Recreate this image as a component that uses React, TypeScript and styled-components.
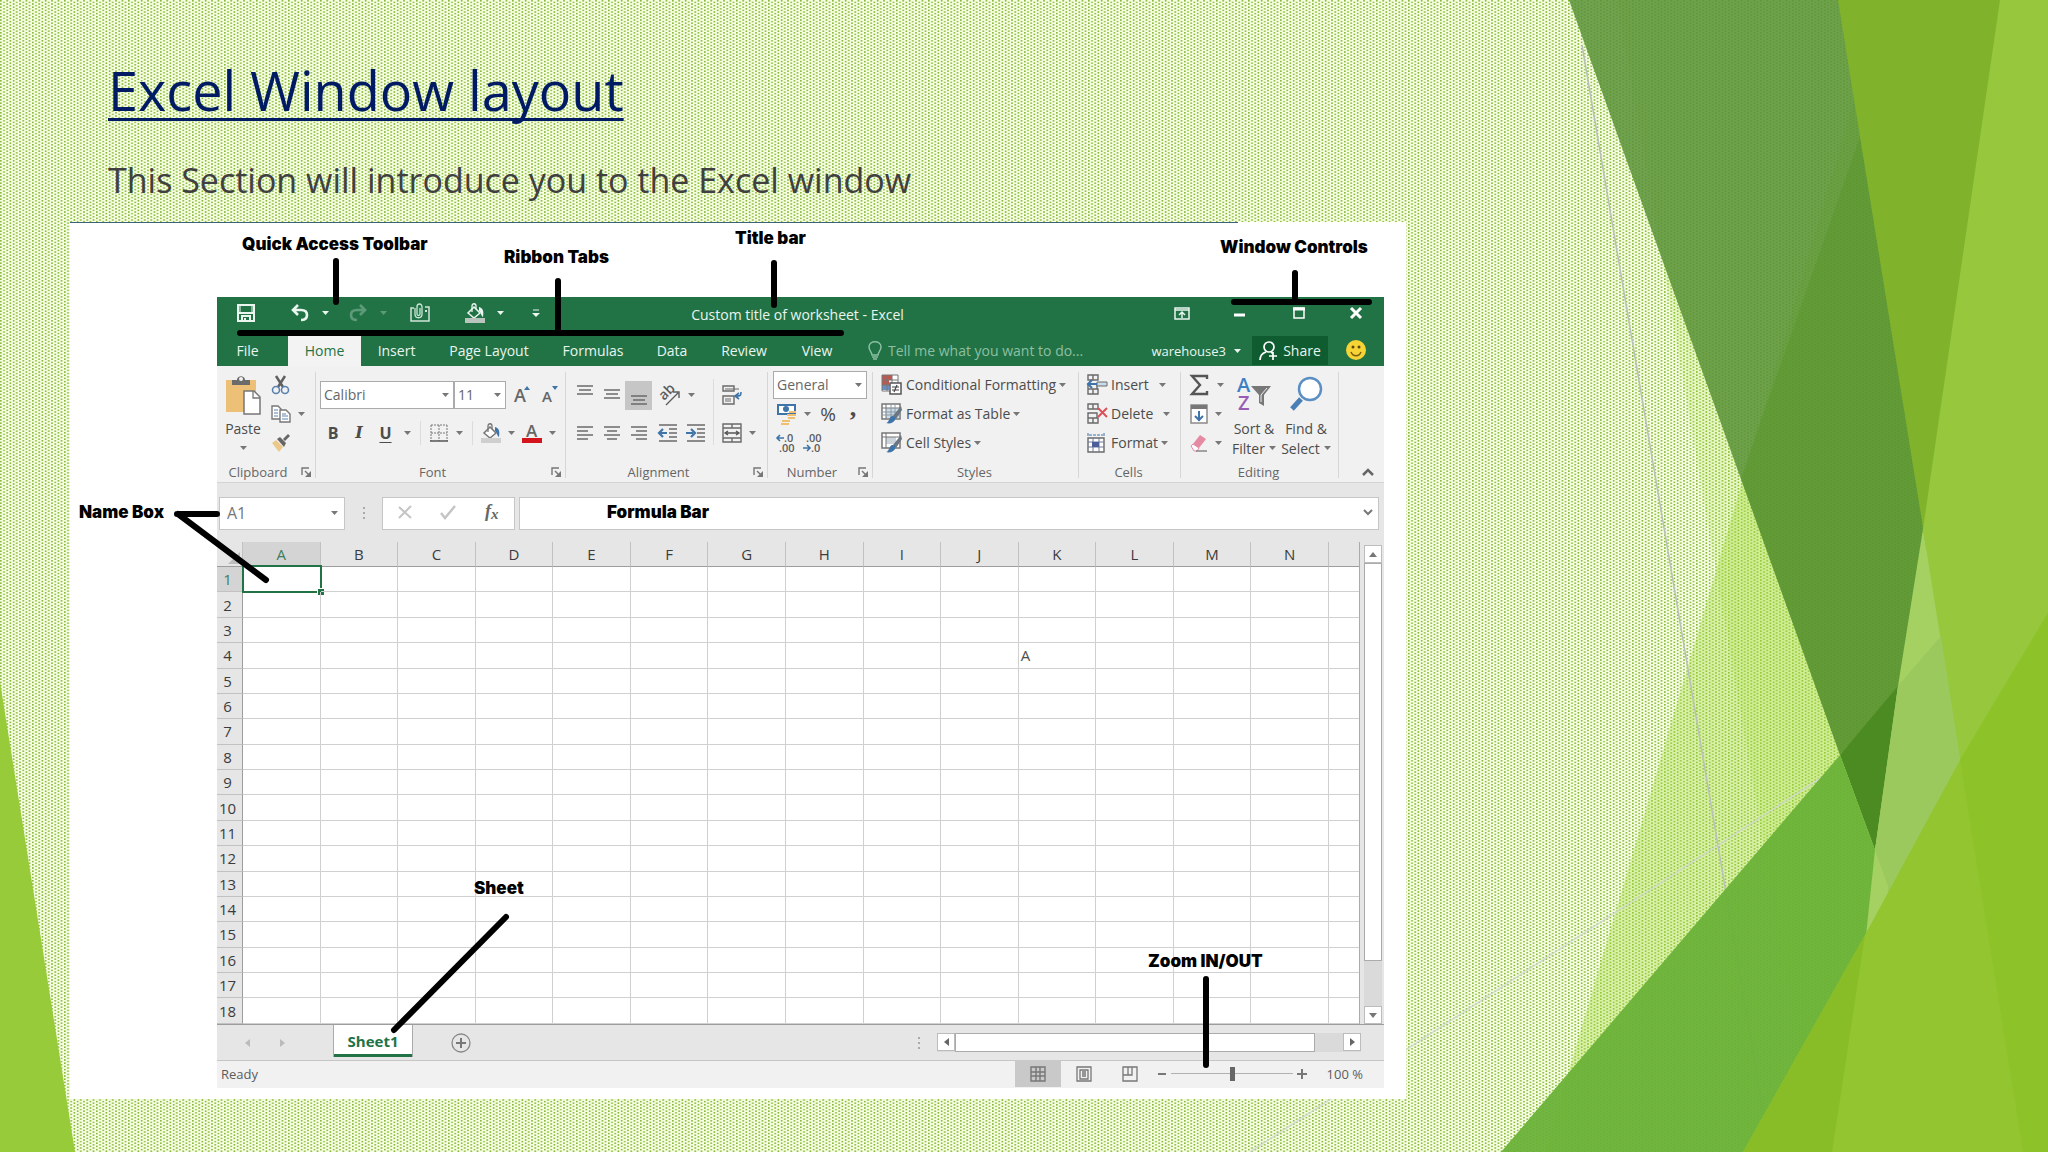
import React from "react";
import styled, { createGlobalStyle, css } from "styled-components";

const GlobalStyle = createGlobalStyle`
  *, *::before, *::after { box-sizing: border-box; }
  body { margin: 0; background: #f0fbd8; font-family: "Open Sans", "Noto Sans", sans-serif; }
  button, input, select { font: inherit; color: inherit; }
`;

const INK = "#5c5c5c";
const BLUE = "#3f74a8";

/* ---------- slide ---------- */

const Slide = styled.main`
  position: relative;
  min-height: 100vh;
  overflow: hidden;
  display: grid;
  grid-template-columns: minmax(0, 11fr) minmax(0, 5fr);
`;

const Backdrop = styled.svg`
  position: absolute;
  inset: 0;
  width: 100%;
  height: 100%;
`;

const Content = styled.div`
  position: relative;
  padding: 54px 2px 53px 70px;
`;

const Heading = styled.h1`
  margin: 0 0 30px;
  padding-left: 38px;
  font-size: 54px;
  line-height: 72px;
  font-weight: 400;
  color: #001b64;
  text-decoration: underline;
  text-decoration-thickness: 3px;
  text-underline-offset: 7px;
  text-decoration-skip-ink: none;
`;

const Intro = styled.p`
  margin: 0 0 18px;
  padding-left: 38px;
  font-size: 34px;
  line-height: 48px;
  color: #404040;
`;

const Figure = styled.figure`
  position: relative;
  margin: 0;
  padding: 75px 22px 11px 147px;
  background: #fff;
`;

const TopRule = styled.div`
  position: absolute;
  top: 0;
  left: 0;
  width: 1168px;
  height: 1px;
  background: #3c6478;
`;

const Note = styled.figcaption<{ $x: number; $y: number }>`
  position: absolute;
  left: ${(p) => p.$x}px;
  top: ${(p) => p.$y}px;
  font-family: Inter, "Liberation Sans", sans-serif;
  font-size: 17px;
  line-height: 20px;
  font-weight: 900;
  color: #000;
  white-space: nowrap;
`;

const Leaders = styled.svg`
  position: absolute;
  top: 0;
  left: 0;
  width: 1336px;
  height: 877px;
  pointer-events: none;
`;

/* ---------- workbook window ---------- */

const Window = styled.section`
  display: flex;
  flex-direction: column;
  font-size: 14px;
  line-height: 20px;
  color: #4c4c4c;
`;

const bare = css`
  appearance: none;
  border: 0;
  padding: 0;
  margin: 0;
  background: transparent;
  display: flex;
  align-items: center;
  justify-content: center;
  flex: none;
`;

const TitleBar = styled.header`
  display: grid;
  grid-template-columns: 350px 1fr 228px;
  align-items: start;
  height: 38px;
  background: #217346;
  color: #e9f5ee;
`;

const QuickAccess = styled.div`
  display: flex;
  align-items: center;
  height: 32px;
  padding-left: 12px;
`;

const BarButton = styled.button<{ $w: number; $gap?: number; $dim?: boolean }>`
  ${bare}
  width: ${(p) => p.$w}px;
  height: 30px;
  margin-left: ${(p) => p.$gap ?? 0}px;
  opacity: ${(p) => (p.$dim ? 0.3 : 1)};
`;

const WindowTitle = styled.h2`
  margin: 0;
  font-size: 14px;
  font-weight: 400;
  line-height: 36px;
  text-align: center;
  padding-right: 128px;
`;

const WindowButtons = styled.div`
  display: flex;
  align-items: center;
  height: 32px;
`;

const TabStrip = styled.nav`
  display: flex;
  height: 31px;
  background: #217346;
  color: #e9f5ee;
`;

const Tab = styled.button<{ $w: number; $active?: boolean }>`
  ${bare}
  width: ${(p) => p.$w}px;
  background: ${(p) => (p.$active ? "#f3f3f3" : "transparent")};
  color: ${(p) => (p.$active ? "#217346" : "inherit")};
  &:first-child { margin-right: 10px; }
`;

const TellMe = styled.label`
  flex: 1;
  display: flex;
  align-items: center;
  gap: 6px;
  padding-left: 18px;
  color: #8dbfa2;
  input {
    flex: 1;
    min-width: 0;
    border: 0;
    padding: 0;
    background: transparent;
    outline: 0;
  }
  input::placeholder { color: #8dbfa2; opacity: 1; }
`;

const Account = styled.button`
  ${bare}
  gap: 8px;
  font-size: 13px;
  margin-right: 11px;
`;

const Share = styled.button`
  ${bare}
  width: 76px;
  height: 29px;
  margin-top: 1px;
  gap: 4px;
  background: #0f5c31;
`;

const Ribbon = styled.div`
  display: flex;
  height: 117px;
  padding-top: 4px;
  background: #f1f1f1;
  border-bottom: 1px solid #d4d4d4;
`;

const Group = styled.section<{ $w: number }>`
  position: relative;
  flex: ${(p) => p.$w} 1 0;
  min-width: 0;
  display: flex;
  flex-direction: column;
  &::after {
    content: "";
    position: absolute;
    right: 0;
    top: 2px;
    bottom: 4px;
    width: 1px;
    background: #d6d6d6;
  }
`;

const GroupBody = styled.div<{ $pad: number }>`
  display: flex;
  height: 87px;
  padding-left: ${(p) => p.$pad}px;
`;

const GroupFooter = styled.footer`
  display: flex;
  align-items: center;
  height: 20px;
  margin-top: 5px;
  padding-right: 3px;
  font-size: 13px;
  color: #666;
  span { flex: 1; text-align: center; }
`;

const Launcher = styled.button<{ $w?: number }>`
  ${bare}
  width: ${(p) => p.$w ?? 14}px;
  height: 20px;
`;

const Rows = styled.div<{ $top?: number }>`
  display: flex;
  flex-direction: column;
  padding-top: ${(p) => p.$top ?? 0}px;
`;

const Row = styled.div<{ $h: number }>`
  display: flex;
  align-items: center;
  height: ${(p) => p.$h}px;
`;

const Tool = styled.button<{ $w: number; $on?: boolean }>`
  ${bare}
  width: ${(p) => p.$w}px;
  height: 29px;
  background: ${(p) => (p.$on ? "#c6c6c6" : "transparent")};
`;

const StyleTool = styled(Tool)<{ $face: "bold" | "italic" | "underline" }>`
  font-size: 16px;
  font-weight: 700;
  font-style: ${(p) => (p.$face === "italic" ? "italic" : "normal")};
  font-family: ${(p) => (p.$face === "italic" ? '"DejaVu Serif", serif' : "inherit")};
  text-decoration: ${(p) => (p.$face === "underline" ? "underline" : "none")};
  text-underline-offset: 3px;
`;

const PercentTool = styled(Tool)`
  font-size: 19px;
`;

const CommaTool = styled(Tool)`
  font-family: "Liberation Serif", serif;
  font-size: 26px;
  font-weight: 700;
  padding-bottom: 12px;
`;

const Divider = styled.span<{ $h: number }>`
  flex: none;
  width: 1px;
  height: ${(p) => p.$h}px;
  margin: 0 5px;
  background: #dcdcdc;
`;

const BigTool = styled.button<{ $w: number }>`
  ${bare}
  flex-direction: column;
  justify-content: flex-start;
  width: ${(p) => p.$w}px;
  line-height: 21px;
  white-space: nowrap;
  & > svg:first-child { margin: 5px 0 3px; }
  span { display: flex; align-items: center; gap: 4px; min-height: 20px; }
`;

const TextTool = styled.button<{ $gap: number }>`
  ${bare}
  justify-content: flex-start;
  height: 29px;
  white-space: nowrap;
  span { margin: 0 ${(p) => p.$gap}px 0 2px; }
`;

const Picker = styled.label<{ $w: number }>`
  position: relative;
  flex: none;
  width: ${(p) => p.$w}px;
  height: 28px;
  select {
    appearance: none;
    width: 100%;
    height: 100%;
    padding: 0 16px 0 3px;
    border: 1px solid #ababab;
    border-radius: 0;
    background: #fff;
    color: #666;
  }
  svg { position: absolute; right: 5px; top: 12px; }
`;

const Corner = styled.div`
  display: flex;
  align-items: flex-end;
  justify-content: flex-end;
  flex: 45 1 0;
`;

/* ---------- formula bar ---------- */

const FormulaRow = styled.div`
  display: flex;
  align-items: center;
  height: 59px;
  padding: 1px 5px 0 2px;
  background: #e6e6e6;
`;

const Field = styled.label<{ $w?: number }>`
  display: flex;
  align-items: center;
  flex: ${(p) => (p.$w ? "none" : "1")};
  width: ${(p) => (p.$w ? `${p.$w}px` : "auto")};
  height: 33px;
  padding: 0 6px 0 7px;
  border: 1px solid #c6c6c6;
  background: #fff;
  color: #777;
  font-size: 16px;
  input { flex: 1; min-width: 0; border: 0; padding: 0; outline: 0; background: transparent; }
`;

const FxBox = styled.div`
  display: flex;
  justify-content: space-around;
  width: 133px;
  height: 33px;
  margin-right: 4px;
  border: 1px solid #c6c6c6;
  background: #fff;
`;

const Grip = styled.span`
  display: flex;
  align-items: center;
  justify-content: center;
  width: 37px;
`;

/* ---------- sheet ---------- */

const SheetArea = styled.div`
  display: grid;
  grid-template-columns: minmax(0, 1fr) 24px;
  height: 482px;
  background: #e6e6e6;
`;

const Sheet = styled.table`
  width: 100%;
  height: 482px;
  table-layout: fixed;
  border-collapse: separate;
  border-spacing: 0;
  background: #fff;
  border-right: 1px solid #ababab;
  font-size: 15px;
  line-height: 18px;
  td, th { padding: 0; font-weight: 400; }
  td { border-right: 1px solid #d0d0d0; border-bottom: 1px solid #d0d0d0; }
  td:last-child { border-right: 0; }
`;

const ColHead = styled.th<{ $on?: boolean }>`
  height: 25px;
  background: ${(p) => (p.$on ? "#d4d4d4" : "#e6e6e6")};
  color: ${(p) => (p.$on ? "#3f7d5b" : "#3c3c3c")};
  border-right: 1px solid #c2c2c2;
  border-bottom: 1px solid #9d9d9d;
`;

const CornerHead = styled(ColHead)`
  width: 26px;
  vertical-align: bottom;
  text-align: right;
  svg { display: block; margin: 0 2px 2px auto; }
`;

const EndHead = styled(ColHead)`
  width: 30px;
  border-right: 0;
`;

const RowHead = styled.th<{ $on?: boolean }>`
  background: ${(p) => (p.$on ? "#d4d4d4" : "#e6e6e6")};
  color: ${(p) => (p.$on ? "#3f7d5b" : "#3c3c3c")};
  border-right: 1px solid #9d9d9d;
  border-bottom: 1px solid #c2c2c2;
  && { padding-right: 4px; }
`;

const Cell = styled.td<{ $selected?: boolean }>`
  position: relative;
  && { padding-left: 2px; }
  ${(p) =>
    p.$selected &&
    css`
      &::before {
        content: "";
        position: absolute;
        inset: -2px -2px -2px -1px;
        border: 2px solid #217346;
      }
      &::after {
        content: "";
        position: absolute;
        right: -5px;
        bottom: -5px;
        width: 6px;
        height: 6px;
        background: #217346;
        border: 1px solid #fff;
        box-sizing: content-box;
      }
    `}
`;

const VScroll = styled.div`
  display: flex;
  flex-direction: column;
  margin: 3px 2px 0 4px;
  background: #dadada;
`;

const ScrollButton = styled.button`
  ${bare}
  width: 18px;
  height: 18px;
  border: 1px solid #bcbcbc;
  background: #fff;
`;

const VThumb = styled.div`
  flex: 397 0 0;
  border: 1px solid #ababab;
  background: #fff;
`;

const VTrack = styled.div`
  flex: 45 0 0;
`;

const SheetBar = styled.div`
  display: flex;
  height: 37px;
  border-top: 1px solid #9d9d9d;
  border-bottom: 1px solid #c6c6c6;
  background: #e6e6e6;
`;

const SheetNav = styled.div`
  display: flex;
  align-items: center;
  width: 116px;
  padding-left: 13px;
`;

const SheetTab = styled.button`
  ${bare}
  width: 80px;
  height: 32px;
  border: solid #ababab;
  border-width: 0 1px;
  box-shadow: inset 0 -3px #217346;
  background: #fff;
  color: #217346;
  font-size: 15px;
  font-weight: 700;
`;

const AddSheet = styled.button`
  ${bare}
  width: 40px;
  margin-left: 28px;
`;

const HScroll = styled.div`
  display: flex;
  width: 424px;
  height: 19px;
  margin: 8px 23px 0 0;
  background: #dadada;
`;

const HThumb = styled.div`
  width: 360px;
  border: 1px solid #ababab;
  background: #fff;
  margin-right: auto;
`;

const Push = styled.span`
  flex: 1;
`;

const StatusBar = styled.footer`
  display: flex;
  align-items: center;
  height: 27px;
  padding: 0 21px 2px 4px;
  background: #f1f1f1;
  font-size: 13px;
  color: #5c5c5c;
`;

const ViewButton = styled.button<{ $on?: boolean }>`
  ${bare}
  width: 46px;
  height: 27px;
  background: ${(p) => (p.$on ? "#c9c9c9" : "transparent")};
`;

const ZoomButton = styled.button`
  ${bare}
  width: 18px;
  height: 27px;
`;

const ZoomSlider = styled.input`
  appearance: none;
  width: 122px;
  height: 16px;
  margin: 0;
  background: linear-gradient(#b0b0b0, #b0b0b0) center / 100% 1px no-repeat;
  &::-webkit-slider-thumb {
    appearance: none;
    width: 5px;
    height: 14px;
    background: #666;
  }
`;

const ZoomValue = styled.output`
  width: 52px;
  text-align: right;
  white-space: nowrap;
`;

/* ---------- icons ---------- */

const GlyphSvg = styled.svg`
  flex: none;
  overflow: visible;
`;

const Glyph = ({ w, h, children }: { w: number; h: number; children: React.ReactNode }) => (
  <GlyphSvg width={w} height={h} viewBox={`0 0 ${w} ${h}`} fill="none" aria-hidden="true">
    {children}
  </GlyphSvg>
);

const Caret = ({ color = "#777" }: { color?: string }) => (
  <Glyph w={7} h={4}><path d="M0 0h7L3.500 4z" fill={color} /></Glyph>
);

const DropTool = ({ w, label }: { w: number; label: string }) => (
  <Tool $w={w} aria-label={label}><Caret /></Tool>
);

const SaveIcon = () => (
  <Glyph w={18} h={18}>
    <path d="M1 1h16v16H1z" stroke="#e9f5ee" strokeWidth="2" />
    <path d="M2 9h14M5 17v-5h8v5" stroke="#e9f5ee" strokeWidth="2" />
    <path d="M3 2v6M15 2v6" stroke="#e9f5ee" />
    <path d="M7 14h2v3H7z" fill="#e9f5ee" />
  </Glyph>
);

const UndoIcon = ({ flip }: { flip?: boolean }) => (
  <Glyph w={18} h={18}>
    <g transform={flip ? "translate(18 0) scale(-1 1)" : undefined} stroke="#e9f5ee" strokeWidth="2.600">
      <path d="M7 1L2 6l5 5M2 6h8c4 0 6 2 6 5s-2 5-6 5" />
    </g>
  </Glyph>
);

const AttachIcon = () => (
  <Glyph w={20} h={20}>
    <path d="M4 5H1v13h18V4h-4" stroke="#cfe5d8" strokeWidth="1.500" />
    <path d="M5 5v6c0 5 7 5 7 0V4c0-4-5-4-5 0v7c0 2 3 2 3 0V5" stroke="#cfe5d8" strokeWidth="1.300" />
    <path d="M15 7h2v2h-2z" fill="#cfe5d8" />
  </Glyph>
);

const BucketIcon = ({ ink, bar, tip }: { ink: string; bar: string; tip: string }) => (
  <Glyph w={20} h={20}>
    <path d="M9 4l6 6-6 5-6-5z" fill="#fff" fillOpacity={ink === "#e9f5ee" ? 0 : 1} stroke={ink} strokeWidth="1.500" />
    <path d="M7 9V3c0-3 4-3 4 0v3" stroke={ink} strokeWidth="1.300" />
    <path d="M14 4c4 1 5 4 4 10-2-1-2-5-4-6z" fill={tip} />
    <path d="M0 15h20v5H0z" fill={bar} />
  </Glyph>
);

const PasteIcon = () => (
  <Glyph w={36} h={40}>
    <path d="M1 5h30v32H1z" fill="#ecc077" />
    <path d="M7 10V5h5c0-5 8-5 8 0h5v5z" fill="#6b6b6b" />
    <circle cx="16" cy="4" r="2" fill="#f1f1f1" />
    <path d="M19 16h10l6 6v17H19z" fill="#fff" stroke="#777" strokeWidth="1.500" />
    <path d="M28 16v7h7" stroke="#777" strokeWidth="1.300" />
  </Glyph>
);

const CutIcon = () => (
  <Glyph w={20} h={20}>
    <path d="M5 1l7 11M14 1L7 12" stroke="#606060" strokeWidth="2.500" />
    <circle cx="5" cy="15" r="3.500" stroke="#5b82ae" strokeWidth="1.600" />
    <circle cx="14" cy="15" r="3.500" stroke="#5b82ae" strokeWidth="1.600" />
  </Glyph>
);

const CopyIcon = () => (
  <Glyph w={20} h={20}>
    <path d="M1 2h6l3 3v10H1z" fill="#fff" stroke="#777" strokeWidth="1.400" />
    <path d="M3 6h4M3 9h4M3 12h4" stroke="#5b82ae" />
    <path d="M9 6h6l4 4v8H9z" fill="#fff" stroke="#777" strokeWidth="1.400" />
    <path d="M11 10h4M11 12h6M11 15h6" stroke="#5b82ae" />
  </Glyph>
);

const BrushIcon = () => (
  <Glyph w={20} h={20}>
    <path d="M1 10l4-3 7 7-4 5z" fill="#ecc98a" />
    <path d="M6 6l3-2 6 6-2 4z" fill="#666" />
    <path d="M12 6l5-5 2 2-5 5z" fill="#666" />
  </Glyph>
);

const Lines = ({ rows, y }: { rows: [number, number][]; y: number }) => (
  <Glyph w={18} h={22}>
    {rows.map(([a, b], i) => (
      <path key={i} d={`M${a} ${y + i * 4}H${b}`} stroke="#6a6a6a" strokeWidth="1.500" />
    ))}
  </Glyph>
);

const DentIcon = ({ out }: { out?: boolean }) => (
  <Glyph w={20} h={18}>
    <path d="M1 1h18M11 5h8M11 9h8M11 13h8M1 17h18" stroke="#6a6a6a" strokeWidth="1.500" />
    <path d={out ? "M9 9H2M5 5L1 9l4 4" : "M0 9h7M5 5l4 4-4 4"} stroke={BLUE} strokeWidth="2.200" />
  </Glyph>
);

const OrientIcon = () => (
  <Glyph w={22} h={22}>
    <text x="0" y="0" transform="translate(6 17) rotate(-45)" fontSize="14" fontWeight="600" fill={INK}>ab</text>
    <path d="M8 21L20 9M15 8h6v6" stroke={INK} strokeWidth="1.400" />
  </Glyph>
);

const WrapIcon = () => (
  <Glyph w={20} h={20}>
    <path d="M1 1h11v5H1zM1 11h11v8H1z" stroke="#6a6a6a" strokeWidth="1.400" />
    <path d="M3 4h14M3 14h6M3 16h6" stroke="#6a6a6a" />
    <path d="M19 7c0 4-1 4-5 4M17 8l-4 3 4 3" stroke={BLUE} strokeWidth="1.600" />
  </Glyph>
);

const MergeIcon = () => (
  <Glyph w={20} h={20}>
    <path d="M1 1h18v18H1zM1 5h18M1 15h18M10 1v4M10 15v4" stroke="#6a6a6a" strokeWidth="1.400" />
    <path d="M3 10h14M6 8l-3 2 3 2M14 8l3 2-3 2" stroke="#555" strokeWidth="1.300" />
  </Glyph>
);

const BorderIcon = () => (
  <Glyph w={18} h={18}>
    <path d="M1 1h16M1 9h16M1 1v16M9 1v16M17 1v16" stroke="#777" strokeDasharray="2 1" />
    <path d="M0 17h18" stroke="#555" strokeWidth="1.500" />
  </Glyph>
);

const FontColorIcon = () => (
  <Glyph w={20} h={20}>
    <text x="4" y="14" fontSize="17" fontWeight="600" fill="#666">A</text>
    <path d="M0 15h20v5H0z" fill="#d4141c" />
  </Glyph>
);

const GrowIcon = ({ size, down }: { size: number; down?: boolean }) => (
  <Glyph w={20} h={24}>
    <text x="2" y="19" fontSize={size} fontWeight="600" fill="#666">A</text>
    <path d={down ? "M12 3h6l-3 4z" : "M12 7h6l-3-4z"} fill={BLUE} />
  </Glyph>
);

const CurrencyIcon = () => (
  <Glyph w={22} h={22}>
    <path d="M2 2h17v9H2z" fill="#fff" stroke={BLUE} strokeWidth="2" />
    <circle cx="10" cy="6" r="3" fill={BLUE} />
    <path d="M13 9h7M11 12h9M12 15h7M6 18h8M5 21h8" stroke="#f0c070" strokeWidth="2" />
  </Glyph>
);

const DecimalIcon = ({ more }: { more?: boolean }) => (
  <Glyph w={22} h={20}>
    <text x={more ? 9 : 4} y="9" fontSize="11" fontWeight="600" fill={INK}>{more ? ".0" : ".00"}</text>
    <text x={more ? 4 : 9} y="19" fontSize="11" fontWeight="600" fill={INK}>{more ? ".00" : ".0"}</text>
    <path d={more ? "M9 5H2M5 2L2 5l3 3" : "M1 15h7M5 12l3 3-3 3"} stroke={BLUE} strokeWidth="1.600" />
  </Glyph>
);

const CondIcon = () => (
  <Glyph w={24} h={22}>
    <path d="M2 1h16v16H2z" fill="#fff" />
    <path d="M2 1h10v5H2zM2 6h7v5H2z" fill="#c0564e" />
    <path d="M2 11h7v5H2z" fill="#6b8fc0" />
    <path d="M2 1h16v16H2zM2 6h16M2 11h16M7 1v16M12 1v16" stroke="#777" />
    <path d="M10 9h11v11H10z" fill="#fff" stroke="#555" strokeWidth="1.500" />
    <path d="M12 13h7M12 16h7M17 11l-3 7" stroke="#444" strokeWidth="1.200" />
  </Glyph>
);

const TableBrushIcon = ({ cells }: { cells?: boolean }) => (
  <Glyph w={24} h={22}>
    <path d="M2 1h18v15H2z" fill="#fff" stroke="#777" strokeWidth="1.500" />
    {cells ? <path d="M6 5h10v7H6z" fill="#cdd3da" /> : <path d="M6 5h13v10H6z" fill="#c9dbe8" />}
    <path d="M2 5h18M6 1v15" stroke="#777" />
    {!cells && <path d="M2 9h18M2 12h18M11 1v15M15 1v15" stroke="#8a9aa6" />}
    <path d="M21 3l-8 10 3 3 6-9z" fill="#6c7680" />
    <path d="M6 20c3 0 3-6 6-7 3 0 4 2 3 4-2 3-5 4-9 3z" fill={BLUE} />
  </Glyph>
);

const CellsIcon = ({ kind }: { kind: "insert" | "delete" | "format" }) => (
  <Glyph w={24} h={22}>
    {kind === "format" ? (
      <>
        <path d="M3 1v4M19 1v4M4 3h14" stroke={BLUE} strokeDasharray="3 1" />
        <path d="M3 6h16v14H3z" fill="#fff" stroke="#6a6a6a" strokeWidth="1.400" />
        <path d="M3 10h16M3 15h16M8 6v14M14 6v14" stroke="#6a7a9a" />
        <path d="M7 10h7v5H7z" fill="#4d5f9a" />
      </>
    ) : (
      <>
        <path d="M3 1h10v5H3zM8 1v5M3 15h10v5H3zM8 15v5M3 10h9v5H3z" stroke="#6a6a6a" strokeWidth="1.400" />
        {kind === "insert" ? (
          <>
            <path d="M12 8h10v4H12z" fill="#c9dbe8" stroke="#6a6a6a" />
            <path d="M12 10H3M7 6l-4 4 4 4" stroke={BLUE} strokeWidth="2" />
          </>
        ) : (
          <path d="M13 5l9 9M22 5l-9 9" stroke="#d9535a" strokeWidth="2" />
        )}
      </>
    )}
  </Glyph>
);

const SigmaIcon = () => (
  <Glyph w={18} h={20}><path d="M17 4V1H2l8 9-8 9h15v-3" stroke="#555" strokeWidth="2.400" /></Glyph>
);

const FillDownIcon = () => (
  <Glyph w={18} h={20}>
    <path d="M1 1h16v18H1z" fill="#fff" stroke="#8a8a8a" strokeWidth="1.500" />
    <path d="M1 1h16v4H1z" fill="#777" />
    <path d="M9 7v10M5 12l4 4 4-4" stroke={BLUE} strokeWidth="2" />
  </Glyph>
);

const EraserIcon = () => (
  <Glyph w={18} h={18}>
    <path d="M3 10L10 1l6 4-7 9z" fill="#e58aa2" />
    <path d="M1 12l2-2 6 4-2 3H4z" fill="#fff" stroke="#e58aa2" />
    <path d="M6 17h11" stroke="#777" strokeWidth="1.300" />
  </Glyph>
);

const SortIcon = () => (
  <Glyph w={38} h={40}>
    <text x="2" y="17" fontSize="20" fontWeight="600" fill="#3f7fc4">A</text>
    <text x="3" y="35" fontSize="20" fontWeight="600" fill="#9a5bb5">Z</text>
    <path d="M16 11h20l-7 9v11l-5-3v-8z" fill="#777" />
    <path d="M26 27v-7l6-7" stroke="#f1f1f1" />
  </Glyph>
);

const FindIcon = () => (
  <Glyph w={36} h={40}>
    <path d="M13 24L4 34" stroke="#4a7fb5" strokeWidth="5" />
    <circle cx="22" cy="14" r="11" fill="#fff" stroke="#5b8fc4" strokeWidth="2.500" />
  </Glyph>
);

const LauncherIcon = () => (
  <Glyph w={10} h={10}>
    <path d="M1 8V1h7" stroke="#777" strokeWidth="1.400" />
    <path d="M4 4l4 4" stroke="#777" strokeWidth="1.400" />
    <path d="M10 4v6H4z" fill="#777" />
  </Glyph>
);

const Foot = ({ label, plain }: { label: string; plain?: boolean }) => (
  <GroupFooter>
    <span>{label}</span>
    {!plain && <Launcher aria-label={`${label} settings`}><LauncherIcon /></Launcher>}
  </GroupFooter>
);

const Choice = ({ w, label, value }: { w: number; label: string; value: string }) => (
  <Picker $w={w}>
    <select aria-label={label} defaultValue={value}><option>{value}</option></select>
    <Caret />
  </Picker>
);

/* ---------- backdrop artwork ---------- */

const SlideArt = () => (
  <Backdrop viewBox="0 0 2048 1152" preserveAspectRatio="none" aria-hidden="true">
    <svg width="2048" height="1152" viewBox="0 0 1280 720" preserveAspectRatio="none">
      <defs>
        <pattern id="weave" width="4" height="2" patternUnits="userSpaceOnUse">
          <rect width="4" height="2" fill="#f7ffe4" />
          <rect width="1" height="1" fill="#88b636" />
          <rect x="2" y="1" width="1" height="1" fill="#88b636" />
        </pattern>
      </defs>
      <rect width="1280" height="720" fill="url(#weave)" />
    </svg>
    <path d="M1884 0H2048V1152H1545z" fill="#a4dc3c" fillOpacity=".36" />
    <path d="M1617 0H2048V1152H1817z" fill="#a4dc3c" fillOpacity=".18" />
    <path d="M1582 45L1770 1152" stroke="#b9c0b9" strokeWidth="1.500" />
    <path d="M1250 1152L1833 770" stroke="#cfd6d2" strokeOpacity=".8" strokeWidth="1.500" />
    <path d="M1569 0H1845L1930 529 1898 690 1840 755z" fill="#579034" fillOpacity=".84" />
    <path d="M1860 137L1930 529 1898 690 1840 755 1741 478z" fill="#4f8f1c" fillOpacity=".28" />
    <path d="M1898 686L1840 755 1875 850 1890 760z" fill="#4c8a22" />
    <path d="M1501 1152L1840 755 1875 850 1880 935 1750 1152z" fill="#68b036" fillOpacity=".93" />
    <path d="M1838 0H2005L1925 540z" fill="#81b22c" />
    <path d="M2000 0H2048V650L1960 790 1923 529z" fill="#96c73c" />
    <path d="M1923 529L1964 785 1865 945 1875 850 1898 686z" fill="#a4d162" />
    <path d="M1898 686L1941 636 1964 785 1888 900 1888 886 1875 850z" fill="#9bc95d" />
    <path d="M2048 613L1960 760 1865 935 1743 1152H2048z" fill="#93c530" />
    <path d="M1865 935L1743 1152H1832z" fill="#89bd28" />
    <path d="M2048 613L1960 760 2023 1152H2048z" fill="#8dc328" />
    <path d="M0 682L75 1152H0z" fill="#98cb3a" />
  </Backdrop>
);

const notes: [string, number, number][] = [
  ["Quick Access Toolbar", 172, 12],
  ["Ribbon Tabs", 434, 25],
  ["Title bar", 665, 6],
  ["Window Controls", 1150, 15],
  ["Name Box", 9, 280],
  ["Formula Bar", 537, 280],
  ["Sheet", 404, 656],
  ["Zoom IN/OUT", 1078, 729],
];

const tabs: [string, number][] = [
  ["File", 61], ["Home", 73], ["Insert", 71], ["Page Layout", 114], ["Formulas", 94],
  ["Data", 64], ["Review", 80], ["View", 66],
];

const columns = "ABCDEFGHIJKLMN".split("");
const rowNumbers = Array.from({ length: 18 }, (_, i) => i + 1);
const cellText: Record<string, string> = { K4: "A" };

const full: [number, number] = [1, 17];

export default function App() {
  return (
    <>
      <GlobalStyle />
      <Slide>
        <SlideArt />
        <Content>
          <Heading>Excel Window layout</Heading>
          <Intro>This Section will introduce you to the Excel window</Intro>
          <Figure>
            <TopRule />
            <Window aria-label="Workbook window">
              <TitleBar>
                <QuickAccess>
                  <BarButton $w={34} aria-label="Save"><SaveIcon /></BarButton>
                  <BarButton $w={38} $gap={18} aria-label="Undo"><UndoIcon /></BarButton>
                  <BarButton $w={12} aria-label="Undo history"><Caret color="#e9f5ee" /></BarButton>
                  <BarButton $w={38} $gap={8} $dim aria-label="Redo"><UndoIcon flip /></BarButton>
                  <BarButton $w={12} $dim aria-label="Redo history"><Caret color="#e9f5ee" /></BarButton>
                  <BarButton $w={34} $gap={14} aria-label="Attach"><AttachIcon /></BarButton>
                  <BarButton $w={38} $gap={19} aria-label="Fill color"><BucketIcon ink="#e9f5ee" bar="#b9c4bd" tip="#e9f5ee" /></BarButton>
                  <BarButton $w={12} aria-label="Fill options"><Caret color="#e9f5ee" /></BarButton>
                  <BarButton $w={20} $gap={20} aria-label="Customize toolbar">
                    <Glyph w={8} h={8}><path d="M1 1h6" stroke="#e9f5ee" /><path d="M0 4h8L4 8z" fill="#e9f5ee" /></Glyph>
                  </BarButton>
                </QuickAccess>
                <WindowTitle>Custom title of worksheet - Excel</WindowTitle>
                <WindowButtons>
                  <BarButton $w={52} aria-label="Ribbon display options">
                    <Glyph w={16} h={13}><path d="M1 1h14v11H1zM1 3h14" stroke="#e9f5ee" strokeWidth="1.500" /><path d="M8 11V6M5 8l3-3 3 3" stroke="#e9f5ee" strokeWidth="1.500" /></Glyph>
                  </BarButton>
                  <BarButton $w={62} aria-label="Minimize"><Glyph w={11} h={12}><path d="M0 8h11" stroke="#fff" strokeWidth="3" /></Glyph></BarButton>
                  <BarButton $w={58} aria-label="Maximize"><Glyph w={12} h={12}><path d="M1 1h10v10H1z" stroke="#fff" strokeWidth="1.500" /><path d="M0 2h12" stroke="#fff" strokeWidth="3" /></Glyph></BarButton>
                  <BarButton $w={56} aria-label="Close"><Glyph w={12} h={12}><path d="M1 1l10 10M11 1L1 11" stroke="#fff" strokeWidth="3" /></Glyph></BarButton>
                </WindowButtons>
              </TitleBar>
              <TabStrip>
                {tabs.map(([name, w]) => (
                  <Tab key={name} $w={w} $active={name === "Home"}>{name}</Tab>
                ))}
                <TellMe>
                  <Glyph w={14} h={20}>
                    <path d="M4 14c0-3-3-4-3-8 0-7 12-7 12 0 0 4-3 5-3 8z" stroke="#8dbfa2" strokeWidth="1.500" />
                    <path d="M4 16h6M5 18h4" stroke="#8dbfa2" strokeWidth="1.500" />
                  </Glyph>
                  <input aria-label="Tell me" placeholder="Tell me what you want to do..." />
                </TellMe>
                <Account>warehouse3 <Caret color="#e9f5ee" /></Account>
                <Share>
                  <Glyph w={20} h={21}>
                    <circle cx="10" cy="7" r="5" stroke="#fff" strokeWidth="1.700" />
                    <path d="M1 20c0-5 3-7 6-8M12 12l2 2M10 16h8M14 12v8" stroke="#fff" strokeWidth="1.700" />
                  </Glyph>
                  Share
                </Share>
                <BarButton $w={56} aria-label="Feedback">
                  <Glyph w={20} h={20}>
                    <circle cx="10" cy="10" r="10" fill="#f6d436" />
                    <path d="M5 12c2 5 8 5 10 0" stroke="#7a5c10" strokeWidth="1.500" />
                    <circle cx="7" cy="7" r="1.500" fill="#5a4510" />
                    <circle cx="13" cy="7" r="1.500" fill="#5a4510" />
                  </Glyph>
                </BarButton>
              </TabStrip>

              <Ribbon>
                <Group $w={99}>
                  <GroupBody $pad={1}>
                    <BigTool $w={50}><PasteIcon /><span>Paste</span><span><Caret /></span></BigTool>
                    <Rows>
                      <Row $h={29}><Tool $w={26} aria-label="Cut"><CutIcon /></Tool></Row>
                      <Row $h={29}><Tool $w={26} aria-label="Copy"><CopyIcon /></Tool><DropTool w={14} label="Copy options" /></Row>
                      <Row $h={29}><Tool $w={26} aria-label="Format painter"><BrushIcon /></Tool></Row>
                    </Rows>
                  </GroupBody>
                  <Foot label="Clipboard" />
                </Group>

                <Group $w={250}>
                  <GroupBody $pad={4}>
                    <Rows $top={6}>
                      <Row $h={38}>
                        <Choice w={134} label="Font" value="Calibri" />
                        <Choice w={52} label="Font size" value="11" />
                        <Tool $w={32} aria-label="Grow font"><GrowIcon size={18} /></Tool>
                        <Tool $w={24} aria-label="Shrink font"><GrowIcon size={15} down /></Tool>
                      </Row>
                      <Row $h={38}>
                        <StyleTool $w={26} $face="bold">B</StyleTool>
                        <StyleTool $w={26} $face="italic">I</StyleTool>
                        <StyleTool $w={27} $face="underline">U</StyleTool>
                        <DropTool w={16} label="Underline options" />
                        <Divider $h={24} />
                        <Tool $w={26} aria-label="Borders"><BorderIcon /></Tool>
                        <DropTool w={15} label="Border options" />
                        <Divider $h={24} />
                        <Tool $w={26} aria-label="Fill"><BucketIcon ink="#777" bar="#cfcfcf" tip={BLUE} /></Tool>
                        <DropTool w={15} label="Fill options" />
                        <Tool $w={26} aria-label="Font color"><FontColorIcon /></Tool>
                        <DropTool w={14} label="Font color options" />
                      </Row>
                    </Rows>
                  </GroupBody>
                  <Foot label="Font" />
                </Group>

                <Group $w={202}>
                  <GroupBody $pad={5}>
                    <Rows $top={6}>
                      <Row $h={38}>
                        <Tool $w={27} aria-label="Top align"><Lines y={2} rows={[full, [3, 15], full]} /></Tool>
                        <Tool $w={27} aria-label="Middle align"><Lines y={6} rows={[full, [3, 15], full]} /></Tool>
                        <Tool $w={27} $on aria-label="Bottom align"><Lines y={12} rows={[full, [3, 15], full]} /></Tool>
                        <Tool $w={34} aria-label="Orientation"><OrientIcon /></Tool>
                        <DropTool w={10} label="Orientation options" />
                      </Row>
                      <Row $h={38}>
                        <Tool $w={27} aria-label="Align left"><Lines y={5} rows={[full, [1, 12], full, [1, 12]]} /></Tool>
                        <Tool $w={27} aria-label="Center"><Lines y={5} rows={[full, [4, 14], full, [4, 14]]} /></Tool>
                        <Tool $w={27} aria-label="Align right"><Lines y={5} rows={[full, [6, 17], full, [6, 17]]} /></Tool>
                        <Tool $w={32} aria-label="Decrease indent"><DentIcon out /></Tool>
                        <Tool $w={24} aria-label="Increase indent"><DentIcon /></Tool>
                      </Row>
                    </Rows>
                    <Row $h={84}><Divider $h={66} /></Row>
                    <Rows $top={6}>
                      <Row $h={38}><Tool $w={26} aria-label="Wrap text"><WrapIcon /></Tool></Row>
                      <Row $h={38}><Tool $w={26} aria-label="Merge"><MergeIcon /></Tool><DropTool w={14} label="Merge options" /></Row>
                    </Rows>
                  </GroupBody>
                  <Foot label="Alignment" />
                </Group>

                <Group $w={105}>
                  <GroupBody $pad={5}>
                    <Rows>
                      <Row $h={29}><Choice w={94} label="Number format" value="General" /></Row>
                      <Row $h={29}>
                        <Tool $w={28} aria-label="Currency"><CurrencyIcon /></Tool>
                        <DropTool w={12} label="Currency options" />
                        <PercentTool $w={30}>%</PercentTool>
                        <CommaTool $w={20}>,</CommaTool>
                      </Row>
                      <Row $h={29}>
                        <Tool $w={26} aria-label="More decimals"><DecimalIcon more /></Tool>
                        <Tool $w={28} aria-label="Fewer decimals"><DecimalIcon /></Tool>
                      </Row>
                    </Rows>
                  </GroupBody>
                  <Foot label="Number" />
                </Group>

                <Group $w={206}>
                  <GroupBody $pad={7}>
                    <Rows>
                      <TextTool $gap={3}><CondIcon /><span>Conditional Formatting</span><Caret /></TextTool>
                      <TextTool $gap={3}><TableBrushIcon /><span>Format as Table</span><Caret /></TextTool>
                      <TextTool $gap={3}><TableBrushIcon cells /><span>Cell Styles</span><Caret /></TextTool>
                    </Rows>
                  </GroupBody>
                  <Foot label="Styles" plain />
                </Group>

                <Group $w={102}>
                  <GroupBody $pad={6}>
                    <Rows>
                      <TextTool $gap={10}><CellsIcon kind="insert" /><span>Insert</span><Caret /></TextTool>
                      <TextTool $gap={10}><CellsIcon kind="delete" /><span>Delete</span><Caret /></TextTool>
                      <TextTool $gap={3}><CellsIcon kind="format" /><span>Format</span><Caret /></TextTool>
                    </Rows>
                  </GroupBody>
                  <Foot label="Cells" plain />
                </Group>

                <Group $w={158}>
                  <GroupBody $pad={5}>
                    <Rows>
                      <Row $h={29}><Tool $w={26} aria-label="Sum"><SigmaIcon /></Tool><DropTool w={16} label="Sum options" /></Row>
                      <Row $h={29}><Tool $w={26} aria-label="Fill down"><FillDownIcon /></Tool><DropTool w={12} label="Fill down options" /></Row>
                      <Row $h={29}><Tool $w={26} aria-label="Clear"><EraserIcon /></Tool><DropTool w={12} label="Clear options" /></Row>
                    </Rows>
                    <BigTool $w={52}><SortIcon /><span>Sort &amp;</span><span>Filter <Caret /></span></BigTool>
                    <BigTool $w={52}><FindIcon /><span>Find &amp;</span><span>Select <Caret /></span></BigTool>
                  </GroupBody>
                  <Foot label="Editing" plain />
                </Group>

                <Corner>
                  <Launcher $w={32} aria-label="Collapse ribbon"><Glyph w={12} h={12}><path d="M1 9l5-5 5 5" stroke="#666" strokeWidth="2.500" /></Glyph></Launcher>
                </Corner>
              </Ribbon>

              <FormulaRow>
                <Field $w={126}><input aria-label="Name box" defaultValue="A1" /><Caret /></Field>
                <Grip><Glyph w={4} h={14}><path d="M2 1v2M2 6v2M2 11v2" stroke="#aaa" strokeWidth="2" /></Glyph></Grip>
                <FxBox>
                  <Tool $w={30} aria-label="Cancel"><Glyph w={14} h={14}><path d="M1 2l12 11M13 1L1 13" stroke="#c4c4c4" strokeWidth="2" /></Glyph></Tool>
                  <Tool $w={30} aria-label="Enter"><Glyph w={16} h={14}><path d="M1 8l4 5L15 1" stroke="#c4c4c4" strokeWidth="2.400" /></Glyph></Tool>
                  <Tool $w={30} aria-label="Insert function">
                    <Glyph w={18} h={22}>
                      <text x="2" y="16" fontSize="18" fontStyle="italic" fontWeight="700" fontFamily="Liberation Serif, serif" fill="#666">f</text>
                      <text x="8" y="18" fontSize="15" fontStyle="italic" fontWeight="700" fontFamily="Liberation Serif, serif" fill="#666">x</text>
                    </Glyph>
                  </Tool>
                </FxBox>
                <Field>
                  <input aria-label="Formula" />
                  <Glyph w={8} h={8}><path d="M0 1l4 4 4-4" stroke="#777" strokeWidth="2" /></Glyph>
                </Field>
              </FormulaRow>

              <SheetArea>
                <Sheet>
                  <thead>
                    <tr>
                      <CornerHead aria-label="Select all"><Glyph w={12} h={12}><path d="M12 0v12H0z" fill="#bdbdbd" /></Glyph></CornerHead>
                      {columns.map((c) => <ColHead key={c} scope="col" $on={c === "A"}>{c}</ColHead>)}
                      <EndHead />
                    </tr>
                  </thead>
                  <tbody>
                    {rowNumbers.map((r) => (
                      <tr key={r}>
                        <RowHead scope="row" $on={r === 1}>{r}</RowHead>
                        {columns.map((c) => (
                          <Cell key={c} $selected={c === "A" && r === 1}>{cellText[`${c}${r}`]}</Cell>
                        ))}
                        <Cell />
                      </tr>
                    ))}
                  </tbody>
                </Sheet>
                <VScroll>
                  <ScrollButton aria-label="Scroll up"><Glyph w={8} h={5}><path d="M0 5h8L4 0z" fill="#777" /></Glyph></ScrollButton>
                  <VThumb />
                  <VTrack />
                  <ScrollButton aria-label="Scroll down"><Glyph w={8} h={5}><path d="M0 0h8L4 5z" fill="#777" /></Glyph></ScrollButton>
                </VScroll>
              </SheetArea>

              <SheetBar>
                <SheetNav>
                  <BarButton $w={34} aria-label="Previous sheet"><Glyph w={5} h={8}><path d="M5 0v8L0 4z" fill="#bbb" /></Glyph></BarButton>
                  <BarButton $w={36} aria-label="Next sheet"><Glyph w={5} h={8}><path d="M0 0v8l5-4z" fill="#bbb" /></Glyph></BarButton>
                </SheetNav>
                <SheetTab>Sheet1</SheetTab>
                <AddSheet aria-label="New sheet">
                  <Glyph w={20} h={20}><circle cx="10" cy="10" r="9" stroke="#888" strokeWidth="1.300" /><path d="M5 10h10M10 5v10" stroke="#777" strokeWidth="2" /></Glyph>
                </AddSheet>
                <Push />
                <Grip><Glyph w={4} h={14}><path d="M2 1v2M2 6v2M2 11v2" stroke="#aaa" strokeWidth="2" /></Glyph></Grip>
                <HScroll>
                  <ScrollButton aria-label="Scroll left"><Glyph w={5} h={8}><path d="M5 0v8L0 4z" fill="#666" /></Glyph></ScrollButton>
                  <HThumb />
                  <ScrollButton aria-label="Scroll right"><Glyph w={5} h={8}><path d="M0 0v8l5-4z" fill="#666" /></Glyph></ScrollButton>
                </HScroll>
              </SheetBar>

              <StatusBar>
                <span>Ready</span>
                <Push />
                <ViewButton $on aria-label="Normal view"><Glyph w={16} h={16}><path d="M1 1h14v14H1zM1 6h14M1 10h14M6 1v14M10 1v14" stroke="#777" strokeWidth="1.400" /></Glyph></ViewButton>
                <ViewButton aria-label="Page layout view"><Glyph w={16} h={16}><path d="M1 1h14v14H1zM4 4h8v9H4zM6 6h4M6 8h4M6 10h4" stroke="#777" strokeWidth="1.300" /></Glyph></ViewButton>
                <ViewButton aria-label="Page break view"><Glyph w={16} h={16}><path d="M1 1h14v14H1zM1 9h9V1M6 1v8" stroke="#777" strokeWidth="1.300" /></Glyph></ViewButton>
                <ZoomButton aria-label="Zoom out"><Glyph w={8} h={10}><path d="M0 5h8" stroke="#777" strokeWidth="2" /></Glyph></ZoomButton>
                <ZoomSlider type="range" aria-label="Zoom" min={0} max={200} defaultValue={100} />
                <ZoomButton aria-label="Zoom in"><Glyph w={10} h={10}><path d="M0 5h10M5 0v10" stroke="#777" strokeWidth="2" /></Glyph></ZoomButton>
                <ZoomValue>100 %</ZoomValue>
              </StatusBar>
            </Window>

            <Leaders viewBox="0 0 1336 877" aria-hidden="true">
              <path
                d="M266 39v41M488 59v50M170 111H771M704 41v42M1225 51v27M1164 80H1299M107 292h40M108 292L196 358M436 695L324 808M1136 757v86"
                fill="none" stroke="#000" strokeWidth="6" strokeLinecap="round"
              />
            </Leaders>
            {notes.map(([text, x, y]) => <Note key={text} as="span" $x={x} $y={y}>{text}</Note>)}
          </Figure>
        </Content>
      </Slide>
    </>
  );
}
